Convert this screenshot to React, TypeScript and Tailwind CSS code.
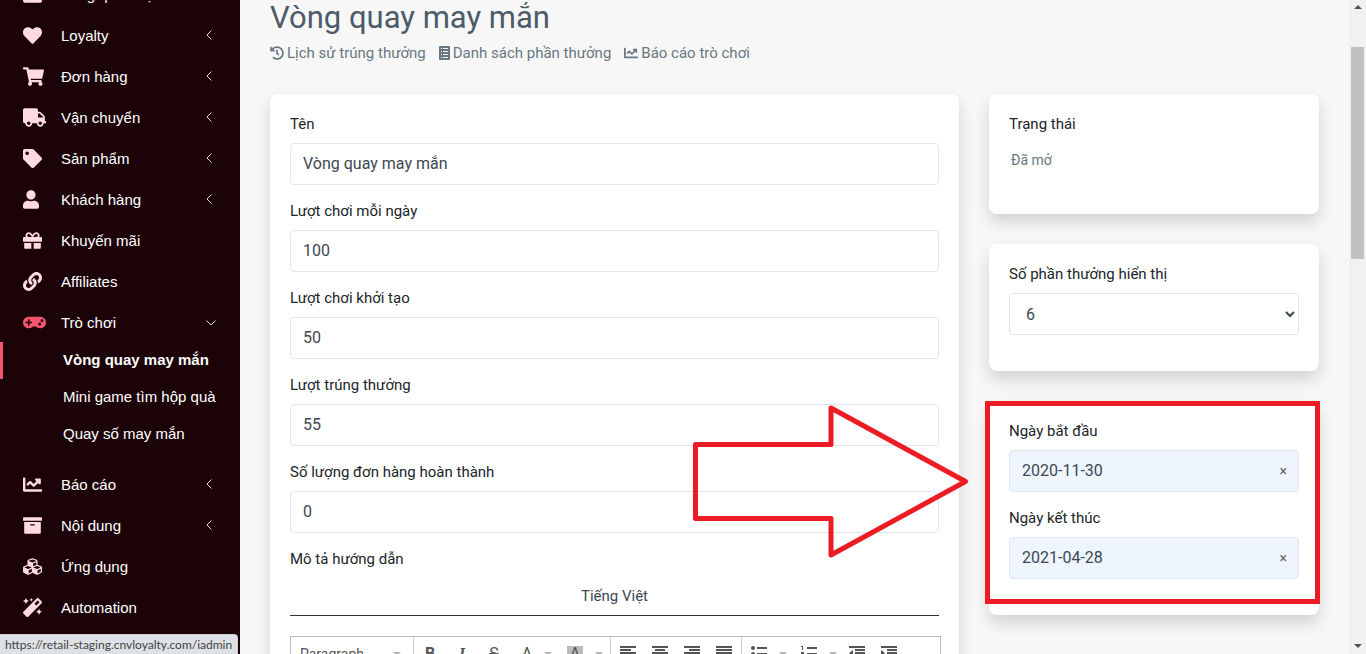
import { useState, type ReactNode } from "react";
import {
  FaArchive,
  FaChartLine,
  FaCubes,
  FaGamepad,
  FaGift,
  FaHeart,
  FaHistory,
  FaLink,
  FaMagic,
  FaShoppingCart,
  FaTag,
  FaTruck,
  FaUser,
} from "react-icons/fa";
import { FaInbox } from "react-icons/fa6";
import type { IconType } from "react-icons";

interface MenuItem {
  label: string;
  icon: IconType;
  iconWidth?: string;
  expandable?: boolean;
}

const menuTop: MenuItem[] = [
  { label: "Tổng quan hệ", icon: FaInbox },
  { label: "Loyalty", icon: FaHeart, expandable: true },
  { label: "Đơn hàng", icon: FaShoppingCart, iconWidth: "w-[21px]", expandable: true },
  { label: "Vận chuyển", icon: FaTruck, iconWidth: "w-[23px]", expandable: true },
  { label: "Sản phẩm", icon: FaTag, expandable: true },
  { label: "Khách hàng", icon: FaUser, iconWidth: "w-4", expandable: true },
  { label: "Khuyến mãi", icon: FaGift },
  { label: "Affiliates", icon: FaLink },
];

const games = ["Vòng quay may mắn", "Mini game tìm hộp quà", "Quay số may mắn"];

const menuBottom: MenuItem[] = [
  { label: "Báo cáo", icon: FaChartLine, expandable: true },
  { label: "Nội dung", icon: FaArchive, expandable: true },
  { label: "Ứng dụng", icon: FaCubes },
  { label: "Automation", icon: FaMagic },
];

const fields = [
  { id: "name", label: "Tên", value: "Vòng quay may mắn" },
  { id: "daily", label: "Lượt chơi mỗi ngày", value: "100" },
  { id: "initial", label: "Lượt chơi khởi tạo", value: "50" },
  { id: "wins", label: "Lượt trúng thưởng", value: "55" },
  { id: "orders", label: "Số lượng đơn hàng hoàn thành", value: "0" },
];

function Chevron({ open }: { open?: boolean }) {
  return open ? (
    <svg className="mt-0.5" width="10" height="6" viewBox="0 0 10 6" fill="none" stroke="#e5d8da">
      <path d="M.5.5 5 5 9.5.5" />
    </svg>
  ) : (
    <svg className="mr-1" width="6" height="10" viewBox="0 0 6 10" fill="none" stroke="#e5d8da">
      <path d="M5.5.5 1 5l4.500 4.500" />
    </svg>
  );
}

function SideLink({ item, active }: { item: MenuItem; active?: boolean }) {
  const Icon = item.icon;
  return (
    <a href="#" className="flex h-[41px] items-center pr-6 pl-[23px] text-white">
      <span className={`w-[38px] pt-0.5 ${active ? "text-[#f6546f]" : "text-[#ffdbe0]"}`}>
        <Icon preserveAspectRatio="xMinYMid" className={`h-[19px] ${item.iconWidth ?? "w-[19px]"}`} />
      </span>
      <span className="grow pt-0.5">{item.label}</span>
      {(item.expandable || active) && <Chevron open={active} />}
    </a>
  );
}

function Sidebar() {
  return (
    <nav className="w-60 shrink-0 overflow-hidden bg-[#1c0308] font-['Liberation_Sans',sans-serif] text-[15px] leading-5">
      <div className="-mt-[27px]">
        {menuTop.map((item) => (
          <SideLink key={item.label} item={item} />
        ))}
        <SideLink item={{ label: "Trò chơi", icon: FaGamepad, iconWidth: "w-[23px]" }} active />
        <div className="mb-2.5">
          {games.map((game, i) => (
            <a
              key={game}
              href="#"
              className={`flex h-[37px] items-center border-l-3 pb-0.5 pl-[60px] text-white ${
                i === 0 ? "border-[#f6546f] font-bold" : "border-transparent"
              }`}
            >
              {game}
            </a>
          ))}
        </div>
        {menuBottom.map((item) => (
          <SideLink key={item.label} item={item} />
        ))}
      </div>
    </nav>
  );
}

function Card({ className = "", children }: { className?: string; children: ReactNode }) {
  return (
    <section className={`rounded-lg bg-white p-5 shadow-[0_8px_16px_rgba(0,0,0,0.15)] ${className}`}>
      {children}
    </section>
  );
}

function DateField({ id, label, initial }: { id: string; label: string; initial: string }) {
  const [value, setValue] = useState(initial);
  return (
    <div>
      <label htmlFor={id} className="block leading-5">
        {label}
      </label>
      <div className="mt-[9px] mb-4 flex h-[42px] items-center rounded border border-[#dfe6f0] bg-[#eef5ff] pr-[11px] pl-3">
        <input
          id={id}
          value={value}
          onChange={(e) => setValue(e.target.value)}
          className="w-full min-w-0 text-base text-[#3d4852] outline-none"
        />
        <button type="button" aria-label="Clear" onClick={() => setValue("")} className="w-2 text-sm text-[#666]">
          ×
        </button>
      </div>
    </div>
  );
}

function ListIcon() {
  return (
    <svg width="11" height="14" viewBox="0 0 11 14">
      <rect width="11" height="14" rx="1" fill="#687882" />
      <path
        d="M2 2h1v1H2zM4 2h5v1H4zM2 5h1v1H2zM4 5h5v1H4zM2 8h1v1H2zM4 8h5v1H4zM2 11h1v1H2zM4 11h5v1H4z"
        fill="#f7f7f7"
      />
    </svg>
  );
}

function Lines({ rows }: { rows: [number, number][] }) {
  return (
    <svg width="16" height="14" viewBox="0 0 16 14" fill="#555">
      {rows.map(([x, w], i) => (
        <rect key={i} x={x} y={i * 3} width={w} height="2" />
      ))}
    </svg>
  );
}

function Caret() {
  return (
    <svg className="mt-1.5" width="8" height="4" viewBox="0 0 8 4" fill="#b5b5b5">
      <path d="M0 0h8L4 4z" />
    </svg>
  );
}

function Tool({ label, className = "w-8", children }: { label: string; className?: string; children: ReactNode }) {
  return (
    <button type="button" aria-label={label} className={`flex items-start justify-center ${className}`}>
      {children}
    </button>
  );
}

function EditorToolbar() {
  return (
    <div className="-mr-0.5 flex h-10 items-start border border-[#bbb] text-[#555] *:flex *:h-full *:items-start *:border-[#ccc] *:pt-[9px]">
      <button type="button" className="w-[123px] justify-between border-r pr-3 pl-[9px] text-sm leading-4">
        Paragraph
        <Caret />
      </button>
      <div className="w-[197px] border-r text-base leading-4">
        <Tool label="Bold"><b>B</b></Tool>
        <Tool label="Italic"><b className="font-serif italic">I</b></Tool>
        <Tool label="Strikethrough"><s>S</s></Tool>
        <Tool label="Text color" className="w-[50px] gap-3 pl-1">A<Caret /></Tool>
        <Tool label="Background color" className="w-[50px] gap-3"><span className="bg-[#bbb] px-[3px]">A</span><Caret /></Tool>
      </div>
      <div className="w-[131px] border-r pl-px">
        <Tool label="Align left"><Lines rows={[[0, 16], [0, 11], [0, 16], [0, 11]]} /></Tool>
        <Tool label="Align center"><Lines rows={[[0, 16], [3, 10], [0, 16], [3, 10]]} /></Tool>
        <Tool label="Align right"><Lines rows={[[0, 16], [5, 11], [0, 16], [5, 11]]} /></Tool>
        <Tool label="Justify"><Lines rows={[[0, 16], [0, 16], [0, 16], [0, 16]]} /></Tool>
      </div>
      <div>
        <Tool label="Bullet list" className="w-[50px] gap-3 pl-1">
          <svg width="16" height="14" viewBox="0 0 16 14" fill="#555">
            <circle cx="2" cy="2" r="2" />
            <circle cx="2" cy="8" r="2" />
            <path d="M6 1h10v2H6zM6 7h10v2H6z" />
          </svg>
          <Caret />
        </Tool>
        <Tool label="Numbered list" className="w-[49px] gap-3 pl-1">
          <svg width="16" height="14" viewBox="0 0 16 14" fill="#555">
            <path d="M0 0h2v4H1V1H0zM0 6h3v3H0zM6 1h10v2H6zM6 7h10v2H6z" />
          </svg>
          <Caret />
        </Tool>
        <Tool label="Outdent">
          <svg width="16" height="14" viewBox="0 0 16 14" fill="#555">
            <path d="M0 0h16v2H0zM6 3h10v2H6zM6 6h10v2H6zM4 4v6L0 7z" />
          </svg>
        </Tool>
        <Tool label="Indent">
          <svg width="16" height="14" viewBox="0 0 16 14" fill="#555">
            <path d="M0 0h16v2H0zM6 3h10v2H6zM6 6h10v2H6zM0 4v6l4-3z" />
          </svg>
        </Tool>
      </div>
    </div>
  );
}

export default function App() {
  return (
    <div className="relative flex h-screen overflow-hidden bg-[#f7f7f7] font-[Roboto,sans-serif] text-[15px] text-[#212529]">
      <Sidebar />

      <main className="min-w-0 grow overflow-hidden px-[30px]">
        <h1 className="text-[31px] leading-9 text-[#4d5b69]">Vòng quay may mắn</h1>
        <div className="mt-[7px] flex gap-[13px] leading-5 text-[#687882]">
          <a href="#" className="flex items-center gap-[3px]"><FaHistory size={14} />Lịch sử trúng thưởng</a>
          <a href="#" className="flex items-center gap-[3px]"><ListIcon />Danh sách phần thưởng</a>
          <a href="#" className="flex items-center gap-[3px]"><FaChartLine size={14} />Báo cáo trò chơi</a>
        </div>

        <div className="mt-[31px] flex items-start gap-[30px]">
          <Card className="min-w-0 grow">
            {fields.map((field) => (
              <div key={field.id}>
                <label htmlFor={field.id} className="block leading-5">
                  {field.label}
                </label>
                <input
                  id={field.id}
                  defaultValue={field.value}
                  className="mt-[9px] mb-4 block h-[42px] w-full rounded border border-[#dfe6f0] px-3 pb-0.5 text-base text-[#3d4852]"
                />
              </div>
            ))}
            <p className="leading-5">Mô tả hướng dẫn</p>
            <button
              type="button"
              className="mt-2 mb-5 block h-[39px] w-full border-b border-[#333] text-[#3d4852]"
            >
              Tiếng Việt
            </button>
            <EditorToolbar />
          </Card>

          <div className="w-[330px] shrink-0 space-y-[30px]">
            <Card className="h-[120px]">
              <p className="leading-5">Trạng thái</p>
              <p className="mt-4 pl-0.5 text-sm leading-5 text-[#687882]">Đã mở</p>
            </Card>
            <Card className="h-[127px]">
              <label htmlFor="slots" className="block leading-5">
                Số phần thưởng hiển thị
              </label>
              <select
                id="slots"
                className="mt-[9px] h-[42px] w-full rounded border border-[#dfe6f0] bg-white px-3 text-base text-[#3d4852]"
              >
                <option>6</option>
              </select>
            </Card>
            <Card className="relative">
              <div className="pointer-events-none absolute top-0 -right-px -left-1 h-[203px] border-5 border-[#ed1c24]" />
              <DateField id="start" label="Ngày bắt đầu" initial="2020-11-30" />
              <DateField id="end" label="Ngày kết thúc" initial="2021-04-28" />
            </Card>
          </div>
        </div>
      </main>

      <div className="flex w-[17px] shrink-0 flex-col items-center bg-[#f1f1f1]">
        <svg className="mt-[5px]" width="8" height="4" viewBox="0 0 8 4" fill="#505050">
          <path d="M0 4h8L4 0z" />
        </svg>
        <div className="mt-[38px] h-[212px] w-[13px] bg-[#c1c1c1]" />
        <svg className="mt-auto mb-1.5" width="8" height="4" viewBox="0 0 8 4" fill="#505050">
          <path d="M0 0h8L4 4z" />
        </svg>
      </div>

      <svg
        className="pointer-events-none absolute top-[404px] right-[397px]"
        width="276"
        height="154"
        viewBox="0 0 276 154"
        fill="none"
        stroke="#ed1c24"
        strokeWidth="5"
        strokeLinejoin="round"
      >
        <path d="M2.500 40.500H138V4l134.500 73.500L138 151v-36.500H2.500z" />
      </svg>

      <div className="absolute bottom-0 left-0 h-5 rounded-tr border-t border-r border-[#c8ccd0] bg-[#dee1e6] px-[5px] font-[Lato,sans-serif] text-[12px] leading-5 text-[#444]">
        https://retail-staging.cnvloyalty.com/iadmin
      </div>
    </div>
  );
}
